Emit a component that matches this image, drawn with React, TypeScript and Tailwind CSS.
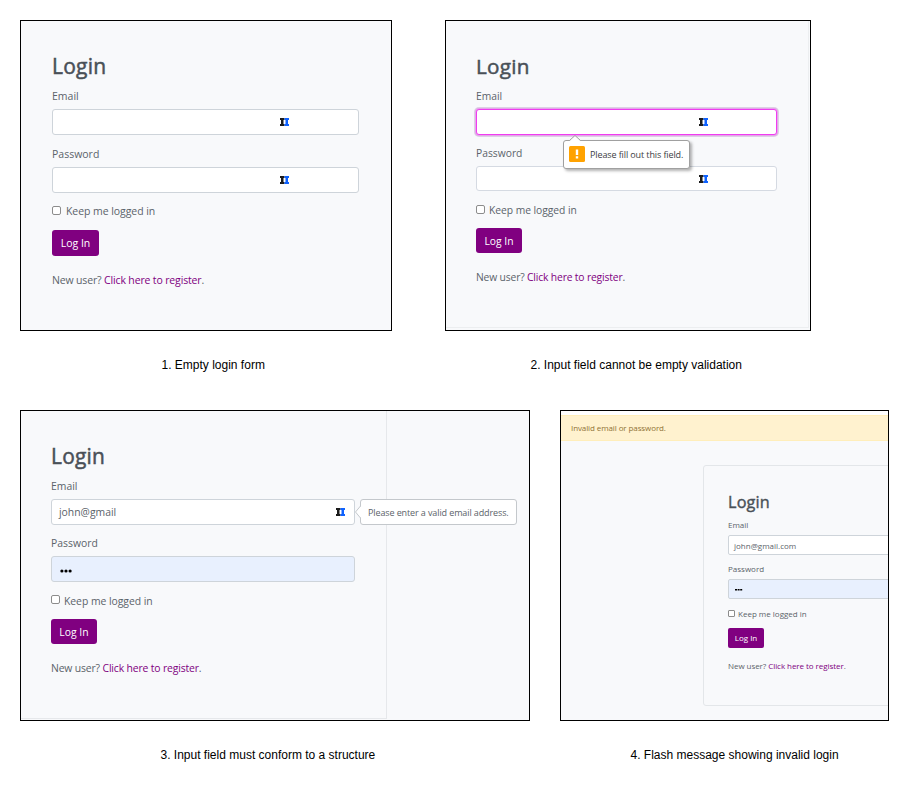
import type { ReactNode } from "react";

type FormStyle = {
  root: string;
  title: string;
  label: string;
  emailBox: string;
  passLabel: string;
  passBox: string;
  check: string;
  box: string;
  checkText: string;
  button: string;
  register: string;
};

function FieldMark() {
  return (
    <svg width="9" height="8" viewBox="0 0 9 8" className="shrink-0">
      <path d="M0 0h4.5v2h-1v4h1v2H0V6h1V2H0z" fill="#1b1b1b" />
      <path d="M4.5 0H9v2H8v4h1v2H4.5V6h1V2h-1z" fill="#0f62fe" />
    </svg>
  );
}

type LoginFormProps = {
  s: FormStyle;
  email?: ReactNode;
  password?: ReactNode;
  overlay?: ReactNode;
};

function LoginForm({ s, email, password, overlay }: LoginFormProps) {
  return (
    <div className={`flex flex-col whitespace-nowrap text-[#5b636a] ${s.root}`}>
      <h2 className={`flex items-center text-[#495057] ${s.title}`}>Login</h2>
      <div className={`flex items-center ${s.label}`}>Email</div>
      <div className={`relative flex items-center border ${s.emailBox}`}>
        {email}
        {overlay}
      </div>
      <div className={`flex items-center ${s.passLabel}`}>Password</div>
      <div className={`flex items-center border ${s.passBox}`}>{password}</div>
      <div className={`flex items-center ${s.check}`}>
        <span className={`shrink-0 border border-[#8c8c8c] bg-white ${s.box}`} />
        <span className={s.checkText}>Keep me logged in</span>
      </div>
      <div className={`flex items-center justify-center bg-[#800080] text-white ${s.button}`}>Log In</div>
      <div className={`flex items-center ${s.register}`}>
        <span>
          New user? <span className="text-[#800080]">Click here to register</span>.
        </span>
      </div>
    </div>
  );
}

const emptyStyle: FormStyle = {
  root: "ml-[31px] pt-[28px] w-[307px] text-[10.5px]",
  title: "h-[32px] pt-[3px] text-[21px] tracking-[0.25px] [-webkit-text-stroke:0.5px_#495057]",
  label: "h-[28px] pt-[3px]",
  emailBox: "h-[26px] rounded-[3px] border-[#ced4da] bg-white pl-[227px]",
  passLabel: "mt-[4px] h-[28px] pt-[3px]",
  passBox: "h-[26px] rounded-[3px] border-[#ced4da] bg-white pl-[227px]",
  check: "mt-[8px] h-[20px]",
  box: "size-[9px] rounded-[2px] -mt-[2px]",
  checkText: "ml-[5px] pt-[2px] tracking-[-0.06px]",
  button: "mt-[9px] h-[26px] w-[47px] rounded-[3px] pt-[2px]",
  register: "mt-[14px] h-[20px] pt-[2px] tracking-[-0.15px]",
};

const requiredStyle: FormStyle = {
  root: "ml-[30px] pt-[29px] w-[301px] text-[10.3px]",
  title: "h-[32px] pt-[2px] text-[20.7px] tracking-[0.25px] [-webkit-text-stroke:0.5px_#495057]",
  label: "h-[27px] pt-[2px]",
  emailBox: "h-[26px] rounded-[3px] border-[#f03cf0] bg-white pl-[222px] shadow-[0_0_0_1px_#e5a5ea,0_0_0_2px_#ddd0e4]",
  passLabel: "mt-[4px] h-[27px] pt-[2px]",
  passBox: "h-[25px] rounded-[3px] border-[#d5dae2] bg-white pl-[222px]",
  check: "mt-[9px] h-[20px]",
  box: "size-[9px] rounded-[2px] -mt-[2px]",
  checkText: "ml-[4px] pt-[2px] tracking-[-0.04px]",
  button: "mt-[8px] h-[25px] w-[46px] rounded-[3px] pt-[2px]",
  register: "mt-[14px] h-[20px] pt-[2px] tracking-[-0.15px]",
};

const formatStyle: FormStyle = {
  root: "ml-[30px] pt-[28px] w-[304px] text-[10.4px]",
  title: "h-[32px] pt-[3px] text-[20.9px] tracking-[0.25px] [-webkit-text-stroke:0.5px_#495057]",
  label: "h-[28px] pt-[3px]",
  emailBox: "h-[26px] rounded-[3px] border-[#ced4da] bg-white pl-[7px]",
  passLabel: "mt-[4px] h-[27px] pt-[2px]",
  passBox: "h-[26px] rounded-[3px] border-[#ced4da] bg-[#e8f0fe] pl-[8px]",
  check: "mt-[9px] h-[20px]",
  box: "size-[9px] rounded-[2px] -mt-[3px]",
  checkText: "ml-[4px] pt-[1px] tracking-[-0.04px]",
  button: "mt-[8px] h-[25px] w-[46px] rounded-[3px] pt-[2px]",
  register: "mt-[15px] h-[20px] tracking-[-0.15px]",
};

const invalidStyle: FormStyle = {
  root: "ml-[24px] pt-[24px] w-[240px] text-[8px]",
  title: "h-[25px] text-[16.2px] tracking-[0.2px] [-webkit-text-stroke:0.4px_#495057]",
  label: "h-[20px]",
  emailBox: "h-[20px] rounded-[2px] border-[#ced4da] bg-white pl-[5px] pt-px",
  passLabel: "mt-[4px] h-[20px]",
  passBox: "h-[20px] rounded-[2px] border-[#ced4da] bg-[#e8f0fe] pl-[6px]",
  check: "mt-[5px] h-[20px]",
  box: "size-[7px] rounded-[1px] -mt-[2px]",
  checkText: "ml-[3px]",
  button: "mt-[4px] h-[20px] w-[36px] rounded-[2px]",
  register: "mt-[8px] h-[20px] tracking-[-0.06px]",
};

function RequiredTip() {
  return (
    <div className="absolute left-[86px] top-[30px] flex h-[29px] w-[127px] items-center rounded-[3px] border border-[#a0a0a0] bg-white pl-[5px] text-[9px] text-[#3c4043] shadow-[2px_2px_3px_rgba(0,0,0,0.3)]">
      <svg width="12" height="6" viewBox="0 0 12 6" className="absolute left-[5px] top-[-6px]">
        <path d="M0.5 6L6 .7L11.500 6z" fill="#fff" />
        <path d="M0.500 5.500L6 .5L11.500 5.500" fill="none" stroke="#a0a0a0" />
      </svg>
      <svg width="16" height="16" viewBox="0 0 16 16" className="-mt-px shrink-0">
        <rect width="16" height="16" rx="1.500" fill="#ffa200" />
        <path d="M6.800 3.500h2.400v5.500H6.800zM6.800 10.200h2.400v2.300H6.800z" fill="#fff" />
      </svg>
      <span className="ml-[5px] tracking-[-0.11px]">Please fill out this field.</span>
    </div>
  );
}

function FormatTip() {
  return (
    <div className="absolute left-[308px] top-[-1px] flex h-[26px] w-[157px] items-center rounded-[3px] border border-[#c4c8cc] bg-white pl-[7px] pt-px text-[9px]">
      <svg width="6" height="14" viewBox="0 0 6 14" className="absolute left-[-6px] top-[5px]">
        <path d="M6 1L.5 7L6 13z" fill="#fff" />
        <path d="M5.500 1L.5 7L5.500 13" fill="none" stroke="#c4c8cc" />
      </svg>
      <span className="tracking-[-0.11px]">Please enter a valid email address.</span>
    </div>
  );
}

function Dots({ small = false }: { small?: boolean }) {
  return (
    <svg
      width={small ? 8 : 12}
      height="4"
      viewBox={small ? "0 0 8 4" : "0 0 12 4"}
      className={small ? "mt-[2px]" : "mt-[3px]"}
    >
      {[0, 1, 2].map((i) =>
        small ? (
          <rect key={i} x={i * 2.6} y="1" width="2" height="1.5" />
        ) : (
          <circle key={i} cx={1.9 + i * 4.1} cy="2" r="1.6" />
        ),
      )}
    </svg>
  );
}

const caption = "flex h-[20px] items-center whitespace-nowrap font-['Liberation_Sans',Arial,sans-serif] text-[12px] text-black";

export default function App() {
  return (
    <main className="h-[791px] w-[909px] overflow-hidden bg-white pl-[20px] pt-[20px] font-['Open_Sans','Noto_Sans',sans-serif]">
      <section className="flex gap-[53px]">
        <figure>
          <div className="h-[311px] w-[372px] overflow-hidden border border-black bg-[#f8f9fb]">
            <LoginForm s={emptyStyle} email={<FieldMark />} password={<FieldMark />} />
          </div>
          <figcaption className={`mt-[24px] pl-[141.5px] ${caption}`}>1. Empty login form</figcaption>
        </figure>
        <figure>
          <div className="h-[311px] w-[366px] overflow-hidden border border-black bg-[#f8f9fb]">
            <div className="h-[307px] w-[363px] border-b border-r border-[#eceef0]">
              <LoginForm s={requiredStyle} email={<FieldMark />} password={<FieldMark />} overlay={<RequiredTip />} />
            </div>
          </div>
          <figcaption className={`mt-[24px] pl-[85.5px] ${caption}`}>2. Input field cannot be empty validation</figcaption>
        </figure>
      </section>

      <section className="mt-[35px] flex gap-[30px]">
        <figure>
          <div className="h-[311px] w-[510px] overflow-hidden border border-black bg-[#f8f9fb]">
            <div className="h-[308px] w-[366px] border-b border-r border-[#e6e8eb]">
              <LoginForm
                s={formatStyle}
                email={
                  <>
                    <span className="w-[277px] pt-[2px]">john@gmail</span>
                    <FieldMark />
                  </>
                }
                password={<Dots />}
                overlay={<FormatTip />}
              />
            </div>
          </div>
          <figcaption className={`mt-[24px] pl-[140.5px] ${caption}`}>3. Input field must conform to a structure</figcaption>
        </figure>
        <figure>
          <div className="h-[311px] w-[329px] overflow-hidden border border-black bg-[#f8f9fb]">
            <div className="h-[4px] bg-white" />
            <div className="flex h-[26px] items-center whitespace-nowrap border-y border-[#ffeeba] bg-[#fff2cf] pl-[10px] text-[8px] tracking-[-0.1px] text-[#907236]">
              Invalid email or password.
            </div>
            <div className="ml-[142px] mt-[24px] h-[241px] w-[240px] rounded-[3px] border border-[#e3e6e9]">
              <LoginForm s={invalidStyle} email={<span>john@gmail.com</span>} password={<Dots small />} />
            </div>
          </div>
          <figcaption className={`mt-[24px] pl-[70.5px] ${caption}`}>4. Flash message showing invalid login</figcaption>
        </figure>
      </section>
    </main>
  );
}
